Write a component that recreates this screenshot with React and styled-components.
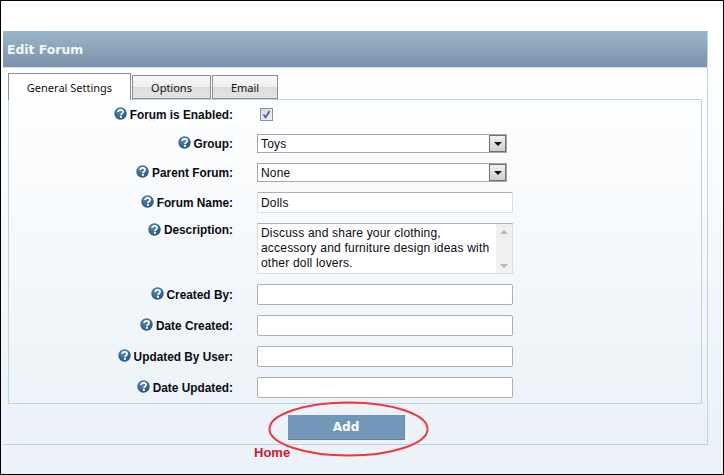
import React from "react";
import styled, { createGlobalStyle } from "styled-components";

const Global = createGlobalStyle`
  html, body { margin: 0; padding: 0; background: #fff; }
  * { box-sizing: border-box; }
`;
const Frame = styled.div`
  position: relative;
  width: 724px; height: 475px;
  border: 1px solid #000;
  background: linear-gradient(#fff 0, #fff 60px, #ecf2f8 420px);
  padding: 30px 15px 0 2px;
  overflow: hidden;
  font-family: "Liberation Sans", Arial, sans-serif;
`;
const Panel = styled.section`
  height: 414px;
  border-right: 1px solid #bad4ea;
  border-bottom: 1px solid #bad4ea;
`;
const Header = styled.h1`
  margin: 0; height: 37px;
  display: flex; align-items: center;
  padding: 1px 0 0 4px;
  font: bold 12.4px "DejaVu Sans", sans-serif;
  color: #f4f7fa;
  background: linear-gradient(#9ab5c9, #7c93ab);
  border-bottom: 1px solid #c5dbee;
`;
const Body = styled.div`
  padding: 5px 5px 0 5px;
`;
const Tabs = styled.div`
  display: flex; align-items: flex-end; height: 26px; gap: 1px; position: relative; z-index: 1;
`;
const Tab = styled.div`
  height: ${p => (p.$active ? "27px" : "24px")};
  width: ${p => p.$w}px;
  display: flex; align-items: center; justify-content: center;
  border: 1px solid #8f8f8f;
  border-bottom: ${p => (p.$active ? "none" : "1px solid #8f8f8f")};
  margin-bottom: ${p => (p.$active ? "-1px" : "0")};
  font: 11px "Noto Sans", sans-serif;
  color: #111;
  background: ${p => (p.$active ? "#fff" : "linear-gradient(#f8f8f8 0, #eeeeee 50%, #dcdcdc 50%, #e4e4e4 100%)")};
`;
const Content = styled.div`
  height: 305px;
  border: 1px solid #bad4ea;
  display: flex; flex-direction: column;
`;
const Row = styled.div`
  display: grid;
  grid-template-columns: 224px 1fr;
  column-gap: 24px;
  align-items: ${p => (p.$top ? "flex-start" : "center")};
  height: ${p => p.$h}px;
  margin-top: ${p => p.$mt}px;
`;
const Label = styled.label`
  display: flex; justify-content: flex-end; align-items: center; gap: 3px;
  font-weight: bold; font-size: 11.85px; color: #0a0a14;
`;
const Help = styled.svg`
  width: 13px; height: 13px; flex: none; margin-top: -2px;
`;
const Check = styled.span`
  display: flex; align-items: center; justify-content: center;
  width: 13px; height: 13px; margin-left: 3px;
  border: 1px solid #8f8f9d;
  background: linear-gradient(135deg, #d8d8e0, #f2f2f6);
`;
const Select = styled.div`
  width: 250px; height: 19px;
  display: flex; align-items: center; justify-content: space-between;
  border: 1px solid #a5a5ac;
  background: #fff;
  padding-left: 3px;
  font-size: 12px; letter-spacing: .2px; color: #0a0a14;
`;
const Arrow = styled.span`
  width: 17px; height: 17px;
  display: flex; align-items: center; justify-content: center;
  border: 1px solid #6f6f6f;
  background: linear-gradient(#f2f2f2, #cfcfcf);
  &::after {
    content: ""; border: 4px solid transparent; border-top: 4px solid #111; border-bottom: 0;
  }
`;
const Input = styled.div`
  width: 256px; height: 21px;
  border: 1px solid ${p => (p.$soft ? "#d8dde2" : "#afafb3")};
  border-top-color: #afafb3;
  border-radius: 2px;
  background: #fff;
  padding: 3px 3px 0;
  font-size: 12px; letter-spacing: .2px; line-height: 15px; color: #0a0a14;
`;
const Area = styled.div`
  width: 256px; height: 51px;
  display: flex; justify-content: space-between;
  border: 1px solid #d8dde2;
  border-top-color: #afafb3;
  background: #fff;
  padding: 2px 0 0 3px;
  font-size: 12px; letter-spacing: .2px; line-height: 15px; color: #0a0a14;
`;
const AreaText = styled.div`
  width: 232px;
`;
const Scroll = styled.div`
  width: 16px;
  display: flex; flex-direction: column; justify-content: space-between; align-items: center;
  background: #f0f0f0;
  margin-top: -2px;
  padding: 6px 0 5px;
  &::before { content: ""; border: 4px solid transparent; border-bottom: 4px solid #b4b4b4; border-top: 0; }
  &::after { content: ""; border: 4px solid transparent; border-top: 4px solid #b4b4b4; border-bottom: 0; }
`;
const Actions = styled.div`
  display: flex; justify-content: flex-start;
  padding: 11px 0 0 280px;
`;
const Button = styled.button`
  width: 117px; height: 25px;
  border: 0; border-bottom: 1px solid #5f7d98; border-right: 1px solid #6a88a3;
  background: #7297b8;
  color: #fff;
  font: bold 12px "DejaVu Sans", sans-serif;
`;
const HomeLink = styled.a`
  display: block;
  font: bold 13px "Liberation Sans", sans-serif;
  color: #c8202c;
`;
const Footer = styled.div`
  padding: 0 0 0 251px;
`;
const Callout = styled.svg`
  position: absolute; left: 266px; top: 400px;
  width: 166px; height: 58px;
  pointer-events: none;
`;

const HelpIcon = () => (
  <Help viewBox="0 0 13 13">
    <defs>
      <radialGradient id="helpBall" cx="0.4" cy="0.3" r="0.8">
        <stop offset="0" stopColor="#5c8db5" />
        <stop offset="1" stopColor="#1f4d78" />
      </radialGradient>
    </defs>
    <circle cx="6.5" cy="6.5" r="6.2" fill="url(#helpBall)" />
    <path d="M4.1 5C4.3 3.4 5.4 2.8 6.6 2.8c1.5 0 2.5.8 2.5 2 0 1.8-2.2 1.7-2.2 3.4" fill="none" stroke="#fff" strokeWidth="1.7" />
    <rect x="5.9" y="9" width="2" height="1.8" fill="#fff" />
  </Help>
);

const Field = ({ label, mt, h = 21, top, children }) => (
  <Row $mt={mt} $h={h} $top={top}>
    <Label><HelpIcon />{label}:</Label>
    {children}
  </Row>
);

export default function App() {
  return (
    <>
      <Global />
      <Frame>
        <Panel>
          <Header>Edit Forum</Header>
          <Body>
            <Tabs>
              <Tab $active $w={123}>General Settings</Tab>
              <Tab $w={79}>Options</Tab>
              <Tab $w={66}>Email</Tab>
            </Tabs>
            <Content>
              <Field label="Forum is Enabled" mt={4} h={21}>
                <Check>
                  <svg width="11" height="11" viewBox="0 0 11 11"><path d="M2.5 5.5 L4.6 8.4 L8.6 2" fill="none" stroke="#3c55a8" strokeWidth="1.6" /></svg>
                </Check>
              </Field>
              <Field label="Group" mt={9} h={19}>
                <Select>Toys<Arrow /></Select>
              </Field>
              <Field label="Parent Forum" mt={10} h={19}>
                <Select>None<Arrow /></Select>
              </Field>
              <Field label="Forum Name" mt={10}>
                <Input $soft>Dolls</Input>
              </Field>
              <Row $mt={10} $h={51} $top>
                <Label><HelpIcon />Description:</Label>
                <Area>
                  <AreaText>Discuss and share your clothing, accessory and furniture design ideas with other doll lovers.</AreaText>
                  <Scroll />
                </Area>
              </Row>
              <Field label="Created By" mt={10}><Input /></Field>
              <Field label="Date Created" mt={10}><Input /></Field>
              <Field label="Updated By User" mt={10}><Input /></Field>
              <Field label="Date Updated" mt={10}><Input /></Field>
            </Content>
            <Actions><Button>Add</Button></Actions>
          </Body>
        </Panel>
        <Footer><HomeLink>Home</HomeLink></Footer>
        <Callout viewBox="0 0 166 58">
          <ellipse cx="81.5" cy="28" rx="79" ry="26.5" fill="none" stroke="#f0383c" strokeWidth="2" />
        </Callout>
      </Frame>
    </>
  );
}
